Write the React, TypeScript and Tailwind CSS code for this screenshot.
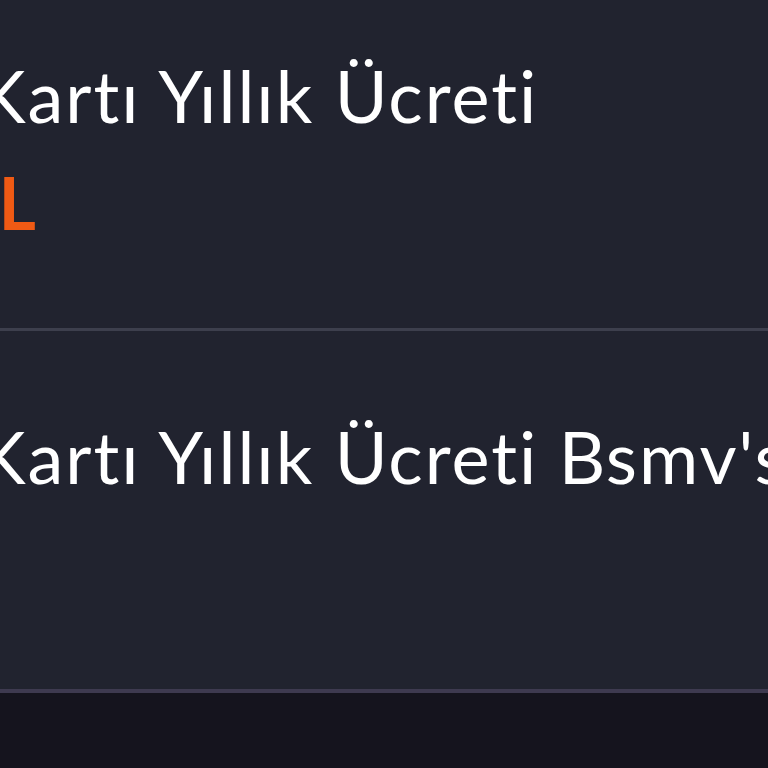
export default function App() {
  return (
    <div className="h-[768px] overflow-hidden bg-[#15141e] font-['Lato',sans-serif] [font-variant-ligatures:none]">
      <div className="bg-[#21232f]">
        <div className="h-[331px] border-b-[3px] border-[#3d3f4d] pt-[59px]">
          <p className="-ml-[22px] whitespace-nowrap text-[72px] leading-[72px] tracking-[2px] text-white">
            Kartı Yıllık Ücreti
          </p>
          <div className="mt-[35px] flex w-[36px] justify-end">
            <span className="shrink-0 whitespace-nowrap text-[72px] font-bold leading-[72px] text-[#f05a14]">
              49,90 TL
            </span>
          </div>
        </div>
        <div className="h-[362px] border-b-[4px] border-[#3e3a50] pt-[89px]">
          <p className="-ml-[22px] whitespace-nowrap text-[72px] leading-[72px] tracking-[2px] text-white">
            Kartı Yıllık Ücreti Bsmv'si
          </p>
        </div>
      </div>
    </div>
  );
}
